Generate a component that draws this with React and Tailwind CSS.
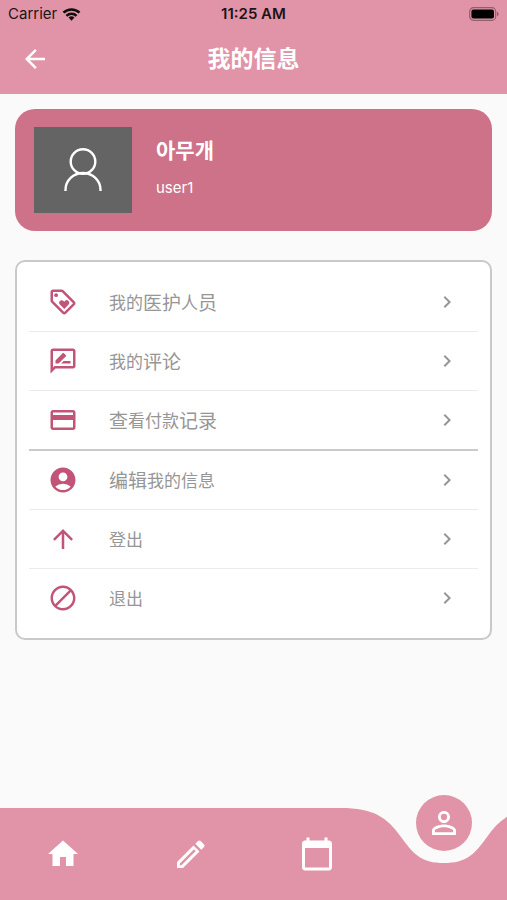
import React from 'react';
import {
  MdArrowBack,
  MdOutlineLoyalty,
  MdOutlineRateReview,
  MdPayment,
  MdAccountCircle,
  MdArrowUpward,
  MdDoNotDisturbAlt,
  MdChevronRight,
  MdHome,
  MdCalendarToday,
  MdPersonOutline,
} from 'react-icons/md';

const menu = [
  {
    icon: MdOutlineLoyalty,
    parts: [{ text: '我的' }, { text: '医护', big: true }, { text: '人' }, { text: '员', big: true }],
    divider: 'border-b border-[#ebebeb]',
  },
  {
    icon: MdOutlineRateReview,
    parts: [{ text: '我的' }, { text: '评论', big: true }],
    divider: 'border-b border-[#ebebeb]',
  },
  {
    icon: MdPayment,
    parts: [{ text: '查', big: true }, { text: '看付款' }, { text: '记录', big: true }],
    divider: 'border-b-2 border-[#cacaca]',
  },
  {
    icon: MdAccountCircle,
    parts: [{ text: '编辑', big: true }, { text: '我的信息' }],
    divider: 'border-b border-[#ebebeb]',
  },
  {
    icon: MdArrowUpward,
    parts: [{ text: '登出' }],
    divider: 'border-b border-[#ebebeb]',
  },
  {
    icon: MdDoNotDisturbAlt,
    parts: [{ text: '退出' }],
    divider: '',
  },
];

function PencilIcon({ size }) {
  return (
    <svg width={size} height={size} viewBox="0 0 36 36" fill="currentColor">
      <path
        fillRule="evenodd"
        d="M5 26 21.5 9.5l6 6L11 32H5zM7.800 27.600v1.700h1.700L23.800 15l-1.700-1.700z"
      />
      <path d="M23.300 7.700 26 5c.8-.8 1.800-.8 2.600 0l3.400 3.400c.8.8.8 1.800 0 2.600l-2.700 2.700z" />
    </svg>
  );
}

const tabs = [
  { icon: MdHome, label: '首页' },
  { icon: PencilIcon, label: '编辑' },
  { icon: MdCalendarToday, label: '日历' },
];

function StatusBar() {
  return (
    <div className="grid h-7 grid-cols-3 items-center px-2 font-['Inter',sans-serif] text-[15px] text-[#1c1418]">
      <div className="flex items-center gap-[5px]">
        <span>Carrier</span>
        <svg width="19" height="14" viewBox="0 0 20 14" fill="none" stroke="#120c0e" strokeWidth="2.7">
          <path d="M1.6 5.6a12 12 0 0 1 16.8 0" />
          <path d="M4.7 8.9a7.6 7.6 0 0 1 10.6 0" />
          <path d="M10 14 6.9 10.8a4.5 4.5 0 0 1 6.2 0z" fill="#120c0e" stroke="none" />
        </svg>
      </div>
      <div className="text-center font-semibold">11:25 AM</div>
      <div className="flex justify-end">
        <svg width="30" height="14" viewBox="0 0 30 14">
          <rect x="0.7" y="0.7" width="26" height="12.6" rx="3.8" fill="none" stroke="#8f5f6b" strokeWidth="1.2" />
          <rect x="2.4" y="2.4" width="22.6" height="9.2" rx="2" fill="#000" />
          <path d="M28 4.8c1 .4 1.6 1.2 1.6 2.2S29 8.8 28 9.2z" fill="#8f5f6b" />
        </svg>
      </div>
    </div>
  );
}

function Header() {
  return (
    <header className="bg-[#e194a7]">
      <StatusBar />
      <div className="grid h-[66px] grid-cols-[48px_1fr_48px] items-center px-[11px] pb-1">
        <button type="button" aria-label="返回" className="flex justify-center text-white">
          <MdArrowBack size={30} />
        </button>
        <h1 className="pb-1 text-center text-[23px] font-bold text-white">我的信息</h1>
      </div>
    </header>
  );
}

function ProfileCard() {
  return (
    <section className="flex gap-6 rounded-[20px] bg-[#cd7289] px-[19px] py-[18px]">
      <div className="flex h-[86px] w-[98px] items-center justify-center bg-[#646464]">
        <svg width="38" height="44" viewBox="0 0 38 44" fill="none" stroke="#fff" strokeWidth="2.4">
          <circle cx="19" cy="13.5" r="12.3" />
          <path d="M1.5 43v-1a17.5 17 0 0 1 35 0v1" />
        </svg>
      </div>
      <div className="pt-1.5 text-white">
        <h2 className="font-['Noto_Sans_CJK_KR',sans-serif] text-[21px] leading-8 font-bold">아무개</h2>
        <p className="pt-3 font-['Inter',sans-serif] text-[15px]">user1</p>
      </div>
    </section>
  );
}

function MenuRow({ icon: Icon, parts, divider }) {
  return (
    <li className={divider}>
      <button type="button" className="flex h-[58px] w-full items-center gap-[31px] px-[19px]">
        <Icon size={30} className="text-[#c25477]" />
        <span className="flex flex-1 items-center text-[17px] leading-6 text-[#969696]">
          {parts.map((part) => (
            <span key={part.text} className={part.big ? 'text-[19px]' : ''}>
              {part.text}
            </span>
          ))}
        </span>
        <MdChevronRight size={24} className="text-[#969696]" />
      </button>
    </li>
  );
}

function BottomNav() {
  return (
    <nav className="relative mt-auto grid h-[92px] grid-cols-4 bg-[#e194a7]">
      {tabs.map(({ icon: Icon, label }) => (
        <button key={label} type="button" aria-label={label} className="flex items-center justify-center text-white">
          <Icon size={36} />
        </button>
      ))}
      <div className="relative">
        {/* notch cut under the active tab */}
        <div className="absolute inset-x-0 -top-px flex justify-center">
          <svg width="206" height="56" viewBox="0 0 206 56" className="shrink-0">
            <path d="M0 0v1c32 0 46 9 60 29 13 18 21 26 43 26s30-8 43-26c14-20 28-29 60-29V0z" fill="#fafafa" />
          </svg>
        </div>
        <div className="absolute inset-x-0 -top-[13px] flex justify-center">
          <button
            type="button"
            aria-label="我的"
            className="flex size-14 items-center justify-center rounded-full bg-[#e194a7] text-white"
          >
            <MdPersonOutline size={36} />
          </button>
        </div>
      </div>
    </nav>
  );
}

export default function App() {
  return (
    <div className="flex min-h-screen flex-col overflow-x-hidden bg-[#fafafa] font-['Noto_Sans_CJK_SC',sans-serif]">
      <Header />
      <main className="flex flex-col gap-[29px] px-[15px] pt-[15px] pb-10">
        <ProfileCard />
        <ul className="rounded-[10px] border-2 border-[#c9c9c9] bg-white px-3 py-[11px]">
          {menu.map((item, i) => (
            <MenuRow key={i} {...item} />
          ))}
        </ul>
      </main>
      <BottomNav />
    </div>
  );
}
